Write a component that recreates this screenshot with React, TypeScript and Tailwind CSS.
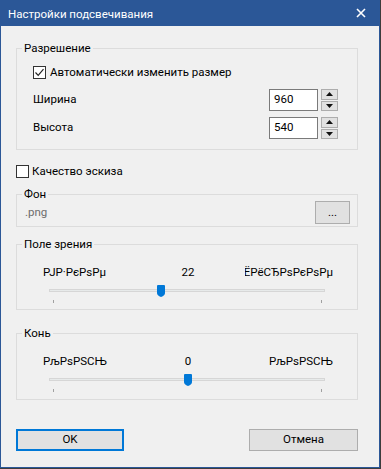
import * as React from "react";

function CheckBox({ checked }: { checked?: boolean }) {
  return (
    <div className="w-[13px] h-[13px] border border-[#333333] bg-white flex items-center justify-center shrink-0">
      {checked ? (
        <svg width="11" height="11" viewBox="0 0 11 11">
          <path d="M1.5 5.5 L4.2 8.3 L9.5 2.2" fill="none" stroke="#222" strokeWidth="1.2" />
        </svg>
      ) : null}
    </div>
  );
}

function Spin({ value }: { value: string }) {
  return (
    <div className="flex items-center gap-[3px]">
      <div className="w-[49px] h-[22px] border border-[#7a7a7a] bg-white pl-[4px] flex items-center text-black">
        {value}
      </div>
      <div className="w-[17px] h-[22px] flex flex-col gap-[1px]">
        <div className="flex-1 border border-[#adadad] bg-[#e1e1e1] flex items-center justify-center">
          <svg width="7" height="4" viewBox="0 0 7 4">
            <path d="M0 4 L3.5 0 L7 4 Z" fill="#111" />
          </svg>
        </div>
        <div className="flex-1 border border-[#adadad] bg-[#e1e1e1] flex items-center justify-center">
          <svg width="7" height="4" viewBox="0 0 7 4">
            <path d="M0 0 L7 0 L3.5 4 Z" fill="#111" />
          </svg>
        </div>
      </div>
    </div>
  );
}

function Group({ title, children }: { title: string; children: React.ReactNode }) {
  return (
    <fieldset className="w-[342px] border border-[#dcdcdc]">
      <legend className="ml-[5px] px-[2px] leading-[16px]">{title}</legend>
      {children}
    </fieldset>
  );
}

function Slider({ left, mid, right, thumb }: { left: string; mid: string; right: string; thumb: number }) {
  return (
    <div>
      <div className="pl-[26px] grid grid-cols-[88px_114px_88px] h-[16px] leading-[16px]">
        <div className="whitespace-nowrap overflow-hidden">{left}</div>
        <div className="text-center">{mid}</div>
        <div className="whitespace-nowrap overflow-hidden flex justify-end">{right}</div>
      </div>
      <div className="relative h-[20px] mt-[3px]">
        <div className="absolute left-[32px] top-[6px] w-[276px] h-[3px] bg-[#e7eaea] border border-[#d6d6d6]" />
        <div className="absolute left-[36px] top-[17px] w-px h-[3px] bg-[#a0a0a0]" />
        <div className="absolute left-[304px] top-[17px] w-px h-[3px] bg-[#a0a0a0]" />
        <svg className="absolute top-[2px]" style={{ left: thumb }} width="8" height="12" viewBox="0 0 8 12">
          <path d="M0 1 Q0 0 1 0 H7 Q8 0 8 1 V8 Q8 10.5 4 12 Q0 10.5 0 8 Z" fill="#0078d7" />
        </svg>
      </div>
    </div>
  );
}

export default function App() {
  return (
    <div className="w-[381px] h-[469px] bg-[#3c3c3c] font-['Roboto',sans-serif] text-[11.5px] text-black">
      <div className="w-[380px] h-[468px] border border-[#2b5797] bg-[#f0f0f0] flex flex-col">
        <div className="h-[25px] bg-[#2b5797] flex items-center justify-between pl-[7px] pr-[13px] text-white shrink-0">
          <span className="leading-[16px] mt-[1px]">Настройки подсвечивания</span>
          <svg width="10" height="10" viewBox="0 0 10 10" className="-mt-[2px]">
            <path d="M1 1 L9 9 M9 1 L1 9" stroke="#fff" strokeWidth="1.6" />
          </svg>
        </div>

        <div className="pl-[15px] flex flex-col">
          <div className="mt-[14px]">
            <Group title="Разрешение">
              <div className="pl-[16px] pr-[19px] pt-[8px] pb-[10px]">
                <div className="h-[16px] flex items-center gap-[4px]">
                  <CheckBox checked />
                  <span className="leading-[16px]">Автоматически изменить размер</span>
                </div>
                <div className="mt-[9px] h-[22px] flex items-center justify-between">
                  <span>Ширина</span>
                  <Spin value="960" />
                </div>
                <div className="mt-[6px] h-[22px] flex items-center justify-between">
                  <span>Высота</span>
                  <Spin value="540" />
                </div>
              </div>
            </Group>
          </div>

          <div className="mt-[13px] h-[16px] flex items-center gap-[3px]">
            <CheckBox />
            <span className="leading-[16px]">Качество эскиза</span>
          </div>

          <div className="mt-[7px]">
            <Group title="Фон">
              <div className="pl-[8px] pr-[7px] pb-[2px] -mt-[1px] h-[25px] flex items-start justify-between">
                <span className="text-[#6d6d6d] leading-[16px] mt-[3px]">.png</span>
                <div className="w-[35px] h-[23px] border border-[#adadad] bg-[#e1e1e1] flex items-center justify-center leading-none">
                  ...
                </div>
              </div>
            </Group>
          </div>

          <div className="mt-[9px]">
            <Group title="Поле зрения">
              <div className="pt-[12px] pb-[6px]">
                <Slider left="РЈР·РєРѕРµ" mid="22" right="РЁРёСЂРѕРєРѕРµ" thumb={140} />
              </div>
            </Group>
          </div>

          <div className="mt-[15px]">
            <Group title="Конь">
              <div className="pt-[12px] pb-[7px]">
                <Slider left="РљРѕРЅСЊ" mid="0" right="РљРѕРЅСЊ" thumb={167} />
              </div>
            </Group>
          </div>

          <div className="mt-[29px] w-[342px] flex justify-between">
            <button className="w-[108px] h-[22px] border-2 border-[#0078d7] bg-[#e1e1e1] flex items-center justify-center">
              OK
            </button>
            <button className="w-[109px] h-[22px] border border-[#adadad] bg-[#e1e1e1] flex items-center justify-center">
              Отмена
            </button>
          </div>
        </div>
      </div>
    </div>
  );
}
